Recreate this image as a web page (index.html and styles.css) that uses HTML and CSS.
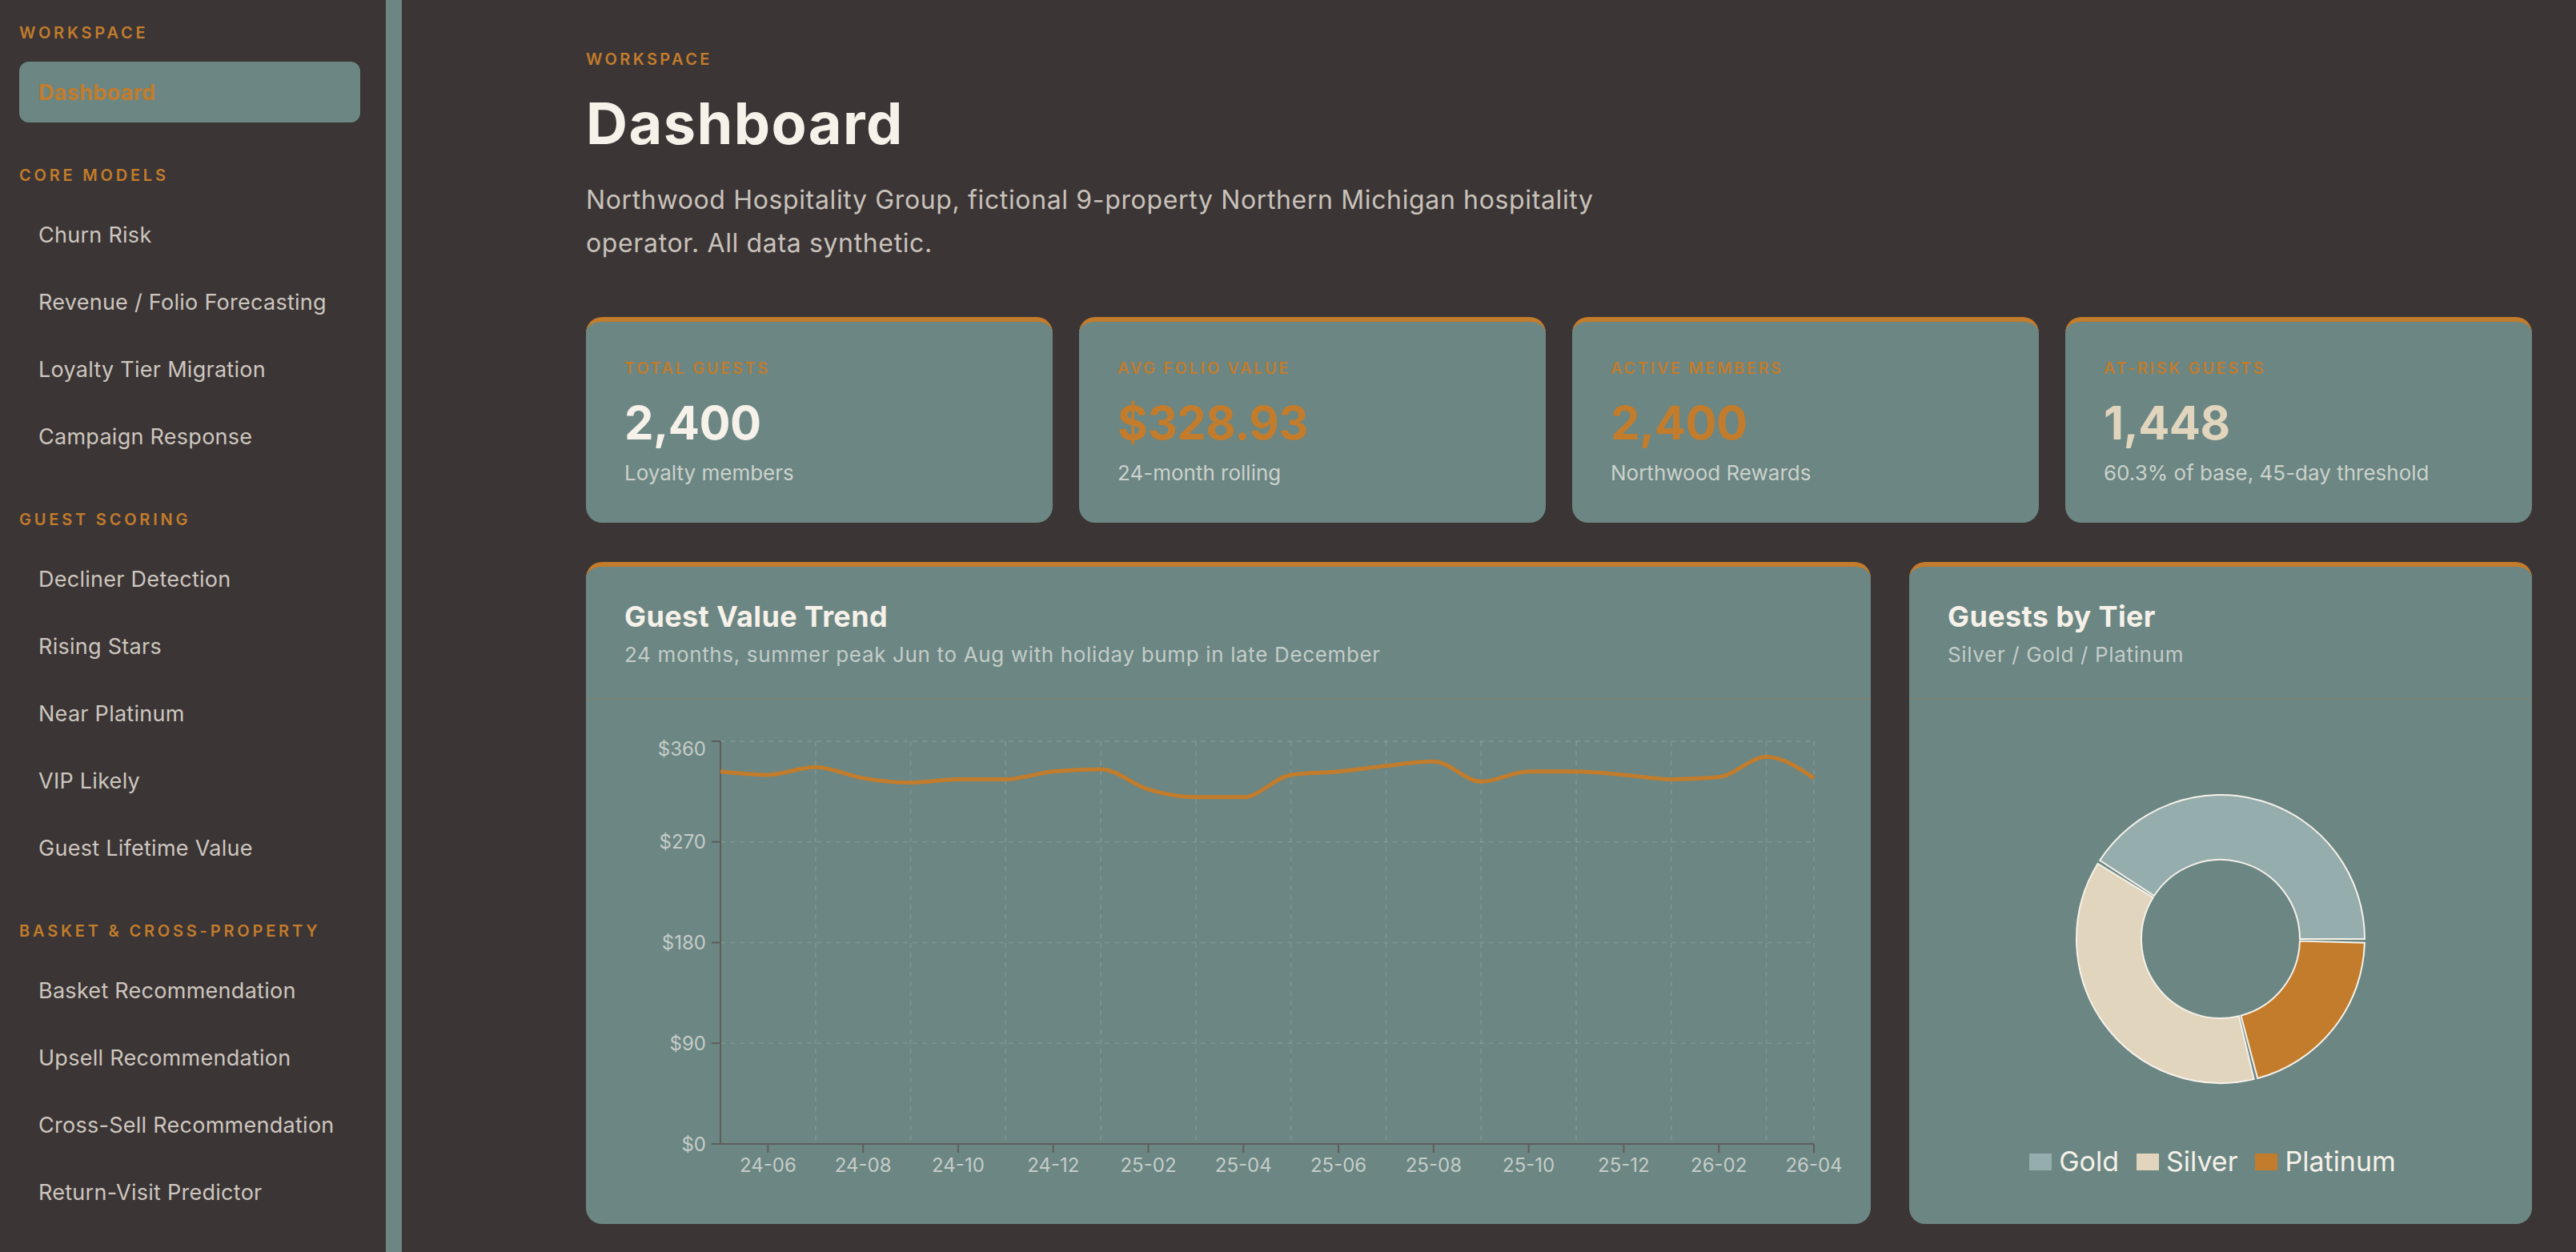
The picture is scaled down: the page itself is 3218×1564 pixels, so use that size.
FILE: index.html
```html
<!DOCTYPE html>
<html>
<head>
	<title>Dashboard · Northwood Hospitality Group</title>
	<meta charset="utf-8">
	<meta name="viewport" content="width=device-width, initial-scale=1">

	<link rel="stylesheet" href="styles.css">
</head>
<body>

	<div class="app">

		<aside class="sidebar">
			<div class="nav-section">
				<div class="nav-label">Workspace</div>
				<a class="nav-item active" href="#">Dashboard</a>
			</div>
			<div class="nav-section">
				<div class="nav-label">Core Models</div>
				<a class="nav-item" href="#">Churn Risk</a>
				<a class="nav-item" href="#">Revenue / Folio Forecasting</a>
				<a class="nav-item" href="#">Loyalty Tier Migration</a>
				<a class="nav-item" href="#">Campaign Response</a>
			</div>
			<div class="nav-section">
				<div class="nav-label">Guest Scoring</div>
				<a class="nav-item" href="#">Decliner Detection</a>
				<a class="nav-item" href="#">Rising Stars</a>
				<a class="nav-item" href="#">Near Platinum</a>
				<a class="nav-item" href="#">VIP Likely</a>
				<a class="nav-item" href="#">Guest Lifetime Value</a>
			</div>
			<div class="nav-section">
				<div class="nav-label">Basket &amp; Cross-Property</div>
				<a class="nav-item" href="#">Basket Recommendation</a>
				<a class="nav-item" href="#">Upsell Recommendation</a>
				<a class="nav-item" href="#">Cross-Sell Recommendation</a>
				<a class="nav-item" href="#">Return-Visit Predictor</a>
			</div>
		</aside>

		<main class="main">
			<div class="eyebrow">Workspace</div>
			<h1>Dashboard</h1>
			<p class="lede">Northwood Hospitality Group, fictional 9-property Northern Michigan hospitality operator. All data synthetic.</p>

			<section class="stats">
				<div class="card stat">
					<div class="stat-label">Total Guests</div>
					<div class="stat-value">2,400</div>
					<div class="stat-sub">Loyalty members</div>
				</div>
				<div class="card stat">
					<div class="stat-label">Avg Folio Value</div>
					<div class="stat-value accent">$328.93</div>
					<div class="stat-sub">24-month rolling</div>
				</div>
				<div class="card stat">
					<div class="stat-label">Active Members</div>
					<div class="stat-value accent">2,400</div>
					<div class="stat-sub">Northwood Rewards</div>
				</div>
				<div class="card stat">
					<div class="stat-label">At-Risk Guests</div>
					<div class="stat-value sand">1,448</div>
					<div class="stat-sub">60.3% of base, 45-day threshold</div>
				</div>
			</section>

			<section class="charts">
				<div class="card chart">
					<header class="chart-head">
						<h2>Guest Value Trend</h2>
						<p>24 months, summer peak Jun to Aug with holiday bump in late December</p>
					</header>
					<div class="chart-body">
						<svg class="trend" id="trend"></svg>
					</div>
				</div>
				<div class="card chart">
					<header class="chart-head">
						<h2>Guests by Tier</h2>
						<p>Silver / Gold / Platinum</p>
					</header>
					<div class="chart-body">
						<svg class="donut" id="donut"></svg>
						<div class="legend" id="legend"></div>
					</div>
				</div>
			</section>
		</main>

	</div>

	<script src="app.js"></script>

</body>
</html>
```

FILE: styles.css
```css
*,
*:before,
*:after {
	box-sizing: border-box;
}

html,
body {
	margin: 0;
	height: 100%;
}

body {
	background-color: #3b3535;
	color: #f6f1e9;
	font-family: Inter, "Open Sans", sans-serif;
	overflow: hidden;
}

.app {
	display: flex;
	height: 100vh;
}

/**
 * Sidebar
 */
.sidebar {
	flex: none;
	width: 502px;
	padding: 29px 32px 0 24px;
	border-right: 20px solid #6b8683;
	overflow: hidden;
}

.nav-section {
	display: flex;
	flex-direction: column;
	gap: 8px;
}

.nav-section + .nav-section {
	margin-top: 54px;
}

.nav-label {
	margin-bottom: 16px;
	color: #c27c2c;
	font-size: 20px;
	font-weight: 600;
	letter-spacing: 0.19em;
	line-height: 24px;
	text-transform: uppercase;
}

.nav-item {
	display: flex;
	align-items: center;
	height: 76px;
	padding: 0 24px;
	border-radius: 12px;
	color: #cdc6bf;
	font-size: 27px;
	letter-spacing: 0.01em;
	text-decoration: none;
}

.nav-item.active {
	background-color: #6b8683;
	color: #c27c2c;
	font-weight: 700;
}

/**
 * Main column
 */
.main {
	flex: 1;
	min-width: 0;
	padding: 62px 55px 0 230px;
}

.eyebrow {
	color: #c27c2c;
	font-size: 20px;
	font-weight: 600;
	letter-spacing: 0.17em;
	line-height: 24px;
	text-transform: uppercase;
}

h1 {
	margin: 26px 0 0;
	font-size: 72px;
	font-weight: 700;
	letter-spacing: 0.02em;
	line-height: 84px;
}

.lede {
	max-width: 1300px;
	margin: 27px 0 0;
	color: #c9c2bb;
	font-size: 32px;
	letter-spacing: 0.02em;
	line-height: 54px;
}

.card {
	background-color: #6b8683;
	border-top: 6px solid #c27c2c;
	border-radius: 20px;
}

/* KPI row */
.stats {
	display: grid;
	grid-template-columns: repeat(4, 1fr);
	gap: 33px;
	margin-top: 65px;
}

.stat {
	padding: 46px 48px;
}

.stat-label {
	color: #c27c2c;
	font-size: 20px;
	font-weight: 600;
	letter-spacing: 0.13em;
	line-height: 24px;
	text-transform: uppercase;
}

.stat-value {
	margin-top: 24px;
	font-size: 58px;
	font-weight: 700;
	letter-spacing: -0.01em;
	line-height: 64px;
}

.stat-value.accent {
	color: #c27c2c;
}

.stat-value.sand {
	color: #e1d5bd;
}

.stat-sub {
	margin-top: 15px;
	color: #ccd1cb;
	font-size: 26px;
	line-height: 32px;
}

/* Charts row */
.charts {
	display: grid;
	grid-template-columns: 1fr 778px;
	gap: 48px;
	margin-top: 49px;
}

.chart-head {
	padding: 40px 48px 38px;
	border-bottom: 2px solid rgba(194, 124, 44, 0.18);
}

.chart-head h2 {
	margin: 0;
	font-size: 36px;
	font-weight: 700;
	letter-spacing: 0.01em;
	line-height: 44px;
}

.chart-head p {
	margin: 10px 0 0;
	color: #c4ccc8;
	font-size: 26px;
	letter-spacing: 0.025em;
	line-height: 32px;
}

.chart-body {
	padding: 24px 48px 48px;
}

.trend {
	display: block;
	width: 100%;
	height: 583px;
	overflow: visible;
}

.donut {
	display: block;
	width: 100%;
	height: 520px;
}

.grid-line {
	stroke: rgba(246, 241, 233, 0.13);
	stroke-width: 2;
	stroke-dasharray: 6 6;
}

.axis-line {
	stroke: #5f5d5c;
	stroke-width: 2;
}

.axis-label {
	fill: #c5ccc8;
	font-size: 24px;
}

.trend-line {
	fill: none;
	stroke: #c27c2c;
	stroke-width: 5;
	stroke-linejoin: round;
}

.slice {
	stroke: #f6f1e9;
	stroke-width: 2;
}

.legend {
	display: flex;
	justify-content: center;
	gap: 22px;
	margin-top: 11px;
	padding-right: 20px;
	font-size: 34px;
	line-height: 44px;
}

.legend-item {
	display: flex;
	align-items: center;
	gap: 9px;
}

.legend-swatch {
	width: 28px;
	height: 21px;
}
```

FILE: app.js
```js
//
// Data
//

var values = [333, 330, 337, 327, 323, 326, 326, 333, 335, 317, 310, 310, 330, 333, 338, 342, 324, 333, 333, 330, 326, 328, 346, 327];

var tiers = [
	{ name: 'Gold', value: 992, color: '#95adac' },
	{ name: 'Silver', value: 911, color: '#e1d5bd' },
	{ name: 'Platinum', value: 497, color: '#c27c2c' }
];

var NS = 'http://www.w3.org/2000/svg';


//
// Helpers
//

var el = function (name, attrs, parent) {
	var node = document.createElementNS(NS, name);
	for (var key in attrs) {
		node.setAttribute(key, attrs[key]);
	}
	if (parent) parent.appendChild(node);
	return node;
};

var monthLabel = function (i) {
	var m = 4 + i; // first point is May 2024
	var year = 24 + Math.floor(m / 12);
	var month = (m % 12) + 1;
	return year + '-' + (month < 10 ? '0' : '') + month;
};

// monotone cubic through the points, same shape as d3's curveMonotoneX
var monotonePath = function (pts) {
	var n = pts.length;
	var t = [];
	var sign = function (v) { return v < 0 ? -1 : 1; };

	for (var i = 1; i < n - 1; i++) {
		var h0 = pts[i][0] - pts[i - 1][0];
		var h1 = pts[i + 1][0] - pts[i][0];
		var s0 = (pts[i][1] - pts[i - 1][1]) / h0;
		var s1 = (pts[i + 1][1] - pts[i][1]) / h1;
		var p = (s0 * h1 + s1 * h0) / (h0 + h1);
		t[i] = (sign(s0) + sign(s1)) * Math.min(Math.abs(s0), Math.abs(s1), 0.5 * Math.abs(p)) || 0;
	}

	var hs = pts[1][0] - pts[0][0];
	t[0] = (3 * (pts[1][1] - pts[0][1]) / hs - t[1]) / 2;
	var he = pts[n - 1][0] - pts[n - 2][0];
	t[n - 1] = (3 * (pts[n - 1][1] - pts[n - 2][1]) / he - t[n - 2]) / 2;

	var d = 'M' + pts[0][0] + ',' + pts[0][1];
	for (i = 0; i < n - 1; i++) {
		var dx = (pts[i + 1][0] - pts[i][0]) / 3;
		d += 'C' + (pts[i][0] + dx) + ',' + (pts[i][1] + dx * t[i]) +
			' ' + (pts[i + 1][0] - dx) + ',' + (pts[i + 1][1] - dx * t[i + 1]) +
			' ' + pts[i + 1][0] + ',' + pts[i + 1][1];
	}
	return d;
};


//
// Guest value trend
//

var drawTrend = function () {
	var svg = document.querySelector('#trend');
	var box = svg.getBoundingClientRect();
	var m = { top: 28, right: 23, bottom: 52, left: 120 };
	var plotW = box.width - m.left - m.right;
	var plotH = box.height - m.top - m.bottom;
	var last = values.length - 1;
	var bottom = m.top + plotH;
	var right = m.left + plotW;

	var x = function (i) { return m.left + plotW * i / last; };
	var y = function (v) { return m.top + plotH * (1 - v / 360); };

	svg.setAttribute('viewBox', '0 0 ' + box.width + ' ' + box.height);

	[90, 180, 270, 360].forEach(function (v) {
		el('line', { 'class': 'grid-line', x1: m.left, x2: right, y1: y(v), y2: y(v) }, svg);
	});

	for (var i = 2; i <= last; i += 2) {
		el('line', { 'class': 'grid-line', x1: x(i), x2: x(i), y1: m.top, y2: bottom }, svg);
	}
	el('line', { 'class': 'grid-line', x1: right, x2: right, y1: m.top, y2: bottom }, svg);

	el('line', { 'class': 'axis-line', x1: m.left, x2: m.left, y1: m.top, y2: bottom + 1 }, svg);
	el('line', { 'class': 'axis-line', x1: m.left - 1, x2: right, y1: bottom, y2: bottom }, svg);

	[0, 90, 180, 270, 360].forEach(function (v) {
		el('line', { 'class': 'axis-line', x1: m.left - 11, x2: m.left, y1: y(v), y2: y(v) }, svg);
		// the top label is kept inside the plot instead of riding on the line
		var label = el('text', {
			'class': 'axis-label',
			x: m.left - 18,
			y: v === 360 ? y(v) + 9 : y(v),
			'text-anchor': 'end',
			'dominant-baseline': 'central'
		}, svg);
		label.textContent = '$' + v;
	});

	for (i = 1; i <= last; i += 2) {
		el('line', { 'class': 'axis-line', x1: x(i), x2: x(i), y1: bottom, y2: bottom + 11 }, svg);
		var tick = el('text', {
			'class': 'axis-label',
			x: x(i),
			y: bottom + 26,
			'text-anchor': 'middle',
			'dominant-baseline': 'central'
		}, svg);
		tick.textContent = monthLabel(i);
	}

	var pts = values.map(function (v, i) { return [x(i), y(v)]; });
	el('path', { 'class': 'trend-line', d: monotonePath(pts) }, svg);
};


//
// Guests by tier
//

var drawDonut = function () {
	var svg = document.querySelector('#donut');
	var box = svg.getBoundingClientRect();
	var cx = box.width / 2;
	var cy = 275;
	var outer = 180;
	var inner = 99;
	var pad = 1.5;
	var total = tiers.reduce(function (sum, t) { return sum + t.value; }, 0);
	var sweep = 360 - pad * tiers.length;
	var start = 0;

	svg.setAttribute('viewBox', '0 0 ' + box.width + ' ' + box.height);

	var point = function (r, deg) {
		var a = deg * Math.PI / 180;
		return (cx + r * Math.cos(a)) + ',' + (cy - r * Math.sin(a));
	};

	tiers.forEach(function (tier) {
		var end = start + sweep * tier.value / total;
		var large = end - start > 180 ? 1 : 0;
		var d = 'M' + point(outer, start) +
			'A' + outer + ',' + outer + ' 0 ' + large + ' 0 ' + point(outer, end) +
			'L' + point(inner, end) +
			'A' + inner + ',' + inner + ' 0 ' + large + ' 1 ' + point(inner, start) + 'Z';
		el('path', { 'class': 'slice', d: d, fill: tier.color }, svg);
		start = end + pad;
	});

	var legend = document.querySelector('#legend');
	tiers.forEach(function (tier) {
		var item = document.createElement('div');
		item.className = 'legend-item';
		var swatch = document.createElement('span');
		swatch.className = 'legend-swatch';
		swatch.style.backgroundColor = tier.color;
		var name = document.createElement('span');
		name.textContent = tier.name;
		item.appendChild(swatch);
		item.appendChild(name);
		legend.appendChild(item);
	});
};

drawTrend();
drawDonut();
```
